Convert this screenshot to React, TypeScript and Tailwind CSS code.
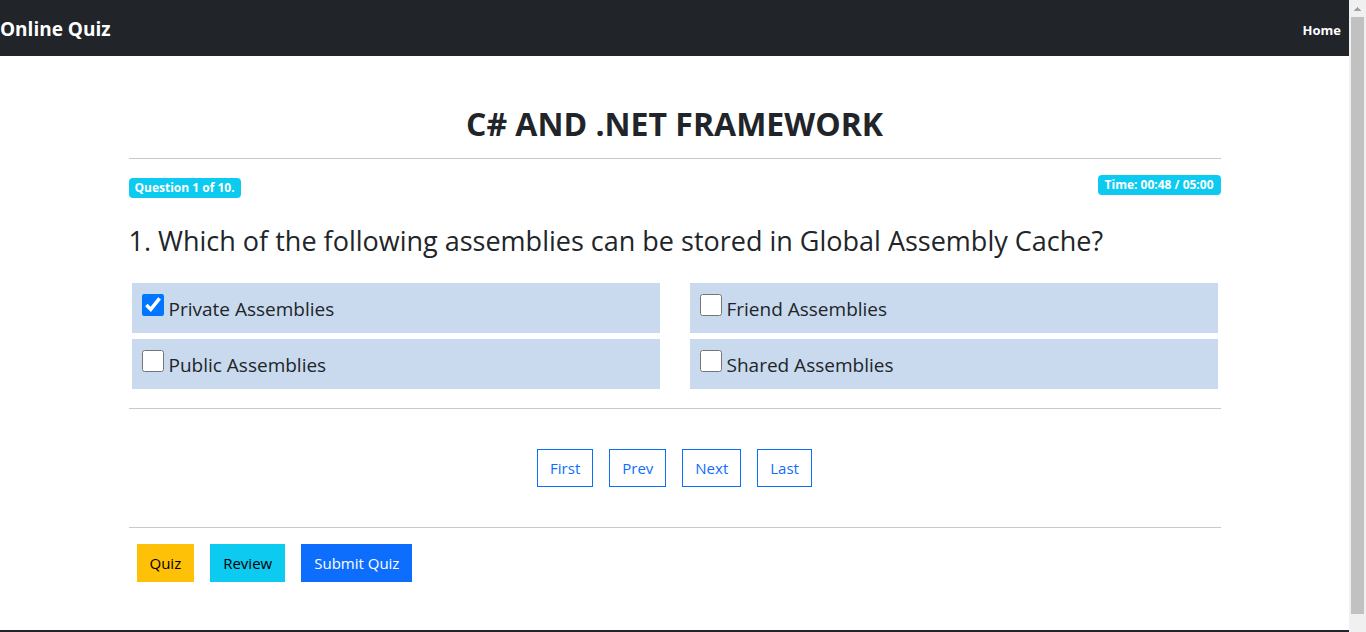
import { useState } from "react";

const options = [
  { id: "private", label: "Private Assemblies" },
  { id: "friend", label: "Friend Assemblies" },
  { id: "public", label: "Public Assemblies" },
  { id: "shared", label: "Shared Assemblies" },
];

const pagerButtons = ["First", "Prev", "Next", "Last"];

function Header() {
  return (
    <header className="flex h-14 items-center justify-between bg-[#212529] pt-px pr-2 font-bold text-white">
      <a href="#" className="text-[19px] leading-7">
        Online Quiz
      </a>
      <nav>
        <a href="#home" className="text-[13px]">
          Home
        </a>
      </nav>
    </header>
  );
}

function Option({ id, label, checked, onToggle }: { id: string; label: string; checked: boolean; onToggle: () => void }) {
  return (
    <label htmlFor={id} className="flex h-[50px] items-start gap-[5px] bg-[#c9daee] px-2.5 pt-[11px] text-[19px] leading-[30px]">
      <input
        id={id}
        type="checkbox"
        checked={checked}
        onChange={onToggle}
        className="size-[22px] shrink-0 accent-[#0075ff]"
      />
      <span>{label}</span>
    </label>
  );
}

function ScrollBar() {
  return (
    <div aria-hidden="true" className="flex w-[17px] shrink-0 flex-col bg-[#f0f0f0] pr-0.5 pl-0.5">
      <div className="flex h-[17px] shrink-0 items-center justify-center">
        <svg width="7" height="4" viewBox="0 0 7 4" shapeRendering="crispEdges" fill="#a3a3a3">
          <path d="M3 0h1v1h1v1h1v1h1v1H0V3h1V2h1V1h1z" />
        </svg>
      </div>
      <div className="mb-[18px] flex-1 bg-[#c1c1c1]" />
    </div>
  );
}

export default function App() {
  const [selected, setSelected] = useState<string[]>(["private"]);
  const toggle = (id: string) =>
    setSelected((current) => (current.includes(id) ? current.filter((x) => x !== id) : [...current, id]));

  return (
    <div className="flex h-screen overflow-hidden bg-white font-['Open_Sans','Noto_Sans',sans-serif] text-[#212529]">
      <div className="min-w-0 flex-1 overflow-hidden">
        <Header />
        <main className="mx-auto max-w-[1140px] px-6 pt-[49px] pb-12">
          <h1 className="text-center text-[32px] leading-[38px] font-bold">C# AND .NET FRAMEWORK</h1>
          <hr className="mt-[15px] border-[#c8c9ca]" />

          <div className="mt-4 flex items-start justify-between text-[12px] leading-5 font-bold text-white">
            <span className="mt-[3px] rounded bg-[#0dcaf0] px-1.5">Question 1 of 10.</span>
            <span className="rounded bg-[#0dcaf0] px-[7px]">Time: 00:48 / 05:00</span>
          </div>

          <h2 className="mt-[25px] text-[27px] leading-9">
            1. Which of the following assemblies can be stored in Global Assembly Cache?
          </h2>

          <div className="mt-6 grid grid-cols-2 gap-x-[30px] gap-y-1.5 px-[3px]">
            {options.map((option) => (
              <Option
                key={option.id}
                id={option.id}
                label={option.label}
                checked={selected.includes(option.id)}
                onToggle={() => toggle(option.id)}
              />
            ))}
          </div>

          <hr className="mt-[19px] border-[#c8c9ca]" />

          <div className="my-10 flex justify-center gap-4">
            {pagerButtons.map((name) => (
              <button key={name} type="button" className="h-[38px] border border-[#0d6efd] px-3 text-[15px] text-[#0d6efd]">
                {name}
              </button>
            ))}
          </div>

          <hr className="border-[#c8c9ca]" />

          <div className="mt-4 flex gap-4 px-2 text-[15px]">
            <button type="button" className="h-[38px] bg-[#ffc107] px-[13px] text-black">
              Quiz
            </button>
            <button type="button" className="h-[38px] bg-[#0dcaf0] px-[13px] text-black">
              Review
            </button>
            <button type="button" className="h-[38px] bg-[#0d6efd] px-[13px] text-white">
              Submit Quiz
            </button>
          </div>
        </main>
        <footer className="h-14 bg-[#212529]" />
      </div>
      <ScrollBar />
    </div>
  );
}
